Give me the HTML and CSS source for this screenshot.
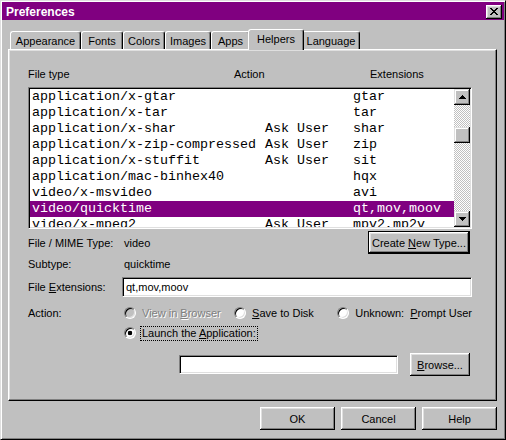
FILE: index.html
```html
<!DOCTYPE html>
<html>
<head>
<meta charset="utf-8">
<title>Preferences</title>
<link rel="stylesheet" href="styles.css">
</head>
<body>
<div class="window">
  <div class="titlebar">
    <span class="title">Preferences</span>
    <button class="close" aria-label="Close">
      <svg width="8" height="7" viewBox="0 0 8 7" shape-rendering="crispEdges">
        <rect x="0" y="0" width="2" height="1"/><rect x="6" y="0" width="2" height="1"/>
        <rect x="1" y="1" width="2" height="1"/><rect x="5" y="1" width="2" height="1"/>
        <rect x="2" y="2" width="4" height="1"/>
        <rect x="3" y="3" width="2" height="1"/>
        <rect x="2" y="4" width="4" height="1"/>
        <rect x="1" y="5" width="2" height="1"/><rect x="5" y="5" width="2" height="1"/>
        <rect x="0" y="6" width="2" height="1"/><rect x="6" y="6" width="2" height="1"/>
      </svg>
    </button>
  </div>

  <div class="tabs">
    <div class="tab tab-appearance">Appearance</div>
    <div class="tab tab-fonts">Fonts</div>
    <div class="tab tab-colors">Colors</div>
    <div class="tab tab-images">Images</div>
    <div class="tab tab-apps">Apps</div>
    <div class="tab tab-helpers selected">Helpers</div>
    <div class="tab tab-language">Language</div>
  </div>

  <div class="panel">
    <div class="list-header">
      <span>File type</span><span>Action</span><span>Extensions</span>
    </div>
    <div class="listbox">
      <div class="rows">
        <div class="row"><span>application/x-gtar</span><span></span><span>gtar</span></div>
        <div class="row"><span>application/x-tar</span><span></span><span>tar</span></div>
        <div class="row"><span>application/x-shar</span><span>Ask User</span><span>shar</span></div>
        <div class="row"><span>application/x-zip-compressed</span><span>Ask User</span><span>zip</span></div>
        <div class="row"><span>application/x-stuffit</span><span>Ask User</span><span>sit</span></div>
        <div class="row"><span>application/mac-binhex40</span><span></span><span>hqx</span></div>
        <div class="row"><span>video/x-msvideo</span><span></span><span>avi</span></div>
        <div class="row selected"><span>video/quicktime</span><span></span><span>qt,mov,moov</span></div>
        <div class="row"><span>video/x-mpeg2</span><span>Ask User</span><span>mpv2,mp2v</span></div>
      </div>
      <div class="scrollbar">
        <div class="sb-btn">
          <svg width="7" height="4" viewBox="0 0 7 4" shape-rendering="crispEdges"><path d="M3 0h1v1h1v1h1v1h1v1H0V3h1V2h1V1h1z"/></svg>
        </div>
        <div class="sb-thumb"></div>
        <div class="sb-btn sb-down">
          <svg width="7" height="4" viewBox="0 0 7 4" shape-rendering="crispEdges"><path d="M0 0h7v1H6v1H5v1H4v1H3V3H2V2H1V1H0z"/></svg>
        </div>
      </div>
    </div>

    <div class="field-row row-mime">
      <span class="label">File / MIME Type:</span>
      <span class="value">video</span>
      <button class="btn default btn-create"><span>Create <u>N</u>ew Type...</span></button>
    </div>
    <div class="field-row row-subtype">
      <span class="label">Subtype:</span>
      <span class="value">quicktime</span>
    </div>
    <div class="field-row row-ext">
      <span class="label">File <u>E</u>xtensions:</span>
      <div class="textbox textbox-ext">qt,mov,moov</div>
    </div>
    <div class="field-row row-action">
      <span class="label">Action:</span>
      <label class="opt opt-view disabled"><span class="radio"></span><span>View in <u>B</u>rowser</span></label>
      <label class="opt opt-save"><span class="radio"></span><span><u>S</u>ave to Disk</span></label>
      <label class="opt opt-unknown"><span class="radio"></span><span>Unknown:&nbsp; <u>P</u>rompt User</span></label>
    </div>
    <div class="field-row row-launch">
      <span class="label"></span>
      <label class="opt"><span class="radio checked"></span><span class="focus">Launch the <u>A</u>pplication:</span></label>
    </div>
    <div class="field-row row-app">
      <div class="textbox textbox-app"></div>
      <button class="btn btn-browse"><span><u>B</u>rowse...</span></button>
    </div>
  </div>

  <div class="dialog-buttons">
    <button class="btn btn-dialog">OK</button>
    <button class="btn btn-dialog">Cancel</button>
    <button class="btn btn-dialog">Help</button>
  </div>
</div>
</body>
</html>
```

FILE: styles.css
```css
* { box-sizing: border-box; }

body {
  margin: 0;
  background: #c0c0c0;
  font-family: "Liberation Sans", Arial, sans-serif;
  font-size: 11px;
  color: #000;
}

.window {
  width: 506px;
  height: 440px;
  border: 1px solid;
  border-color: #dfdfdf #000 #000 #dfdfdf;
  box-shadow: inset 1px 1px #fff, inset -1px -1px #808080;
  padding: 1px;
  background: #c0c0c0;
  display: flex;
  flex-direction: column;
}

.titlebar {
  height: 18px;
  flex: none;
  background: #800080;
  color: #fff;
  display: flex;
  align-items: center;
  justify-content: space-between;
  padding: 1px 2px 0 4px;
}
.title { font-weight: bold; font-size: 12px; }

button {
  font: inherit;
  color: #000;
  background: #c0c0c0;
  border: 0;
  padding: 0;
  margin: 0;
}

.close {
  width: 16px;
  height: 14px;
  display: flex;
  align-items: center;
  justify-content: center;
  box-shadow: inset -1px -1px #000, inset 1px 1px #fff, inset -2px -2px #808080, inset 2px 2px #dfdfdf;
}

/* tabs */
.tabs {
  margin: 9px 0 0 8px;
  height: 20px;
  flex: none;
  display: flex;
  align-items: flex-end;
}
.tab {
  height: 18px;
  border: 1px solid;
  border-bottom: none;
  border-color: #fff #000 transparent #fff;
  box-shadow: inset -1px 0 #808080;
  border-radius: 3px 3px 0 0;
  display: flex;
  align-items: center;
  justify-content: center;
  padding-top: 1px;
}
.tab.selected {
  height: 21px;
  margin: 0 -2px -1px;
  position: relative;
  z-index: 1;
  background: #c0c0c0;
  padding-top: 0;
  padding-bottom: 3px;
}
.tab-appearance { width: 71px; }
.tab-fonts { width: 42px; }
.tab-colors { width: 42px; }
.tab-images { width: 46px; }
.tab-apps { width: 39px; }
.tab-helpers { width: 56px; }
.tab-language { width: 58px; }

/* panel */
.panel {
  margin-left: 6px;
  width: 489px;
  height: 352px;
  flex: none;
  border: 1px solid;
  border-color: #fff #000 #000 #fff;
  box-shadow: inset -1px -1px #808080, inset 1px 1px #dfdfdf;
  padding: 18px 24px 0 19px;
}

.list-header {
  display: grid;
  grid-template-columns: 206px 136px 1fr;
  line-height: 12px;
  margin-bottom: 7px;
}

.listbox {
  height: 142px;
  border: 1px solid;
  border-color: #808080 #fff #fff #808080;
  box-shadow: inset 1px 1px #000, inset -1px -1px #dfdfdf;
  padding: 1px;
  background: #fff;
  display: flex;
}
.rows {
  flex: 1;
  overflow: hidden;
  font-family: "Liberation Mono", "Courier New", monospace;
  font-size: 13.33px;
}
.row {
  display: grid;
  grid-template-columns: 233px 88px 1fr;
  height: 16px;
  line-height: 16px;
  padding-left: 2px;
  white-space: pre;
}
.row.selected { background: #800080; color: #fff; }

.scrollbar {
  width: 16px;
  flex: none;
  display: flex;
  flex-direction: column;
  background: repeating-conic-gradient(#c0c0c0 0 25%, #fff 0 50%) 0 0 / 2px 2px;
}
.sb-btn, .sb-thumb {
  height: 16px;
  flex: none;
  background: #c0c0c0;
  box-shadow: inset -1px -1px #000, inset 1px 1px #dfdfdf, inset -2px -2px #808080, inset 2px 2px #fff;
  display: flex;
  align-items: center;
  justify-content: center;
}
.sb-thumb { margin-top: 22px; }
.sb-down { margin-top: auto; }

/* fields */
.field-row { display: flex; align-items: center; }
.label { width: 94px; flex: none; }
.value { padding-left: 2px; }

.row-mime { margin-top: 2px; height: 23px; }
.row-subtype { height: 19px; }
.row-ext { margin-top: 4px; height: 20px; }
.row-action { margin-top: 6px; height: 20px; }
.row-launch { height: 20px; }
.row-app { margin-top: 10px; height: 23px; justify-content: flex-end; }

.btn {
  box-shadow: inset -1px -1px #000, inset 1px 1px #fff, inset -2px -2px #808080, inset 2px 2px #dfdfdf;
  display: flex;
  align-items: center;
  justify-content: center;
}
.btn.default { border: 1px solid #000; }
.btn-create { margin-left: auto; margin-right: 2px; width: 102px; height: 23px; }
.btn-browse { width: 60px; height: 23px; margin-right: 2px; }
.btn-dialog { width: 75px; height: 23px; }

.textbox {
  height: 20px;
  background: #fff;
  border: 1px solid;
  border-color: #808080 #fff #fff #808080;
  box-shadow: inset 1px 1px #000, inset -1px -1px #dfdfdf;
  padding: 0 3px;
  display: flex;
  align-items: center;
}
.textbox-ext { flex: 1; }
.textbox-app { width: 219px; height: 19px; margin-right: 12px; }

.opt { display: flex; align-items: center; gap: 6px; white-space: nowrap; }
.opt-view { width: 111px; }
.opt-save { width: 104px; }
.radio {
  width: 12px;
  height: 12px;
  margin-left: 2px;
  flex: none;
  border-radius: 50%;
  border: 1px solid;
  border-color: #808080 #fff #fff #808080;
  box-shadow: inset 1px 1px #000, inset -1px -1px #dfdfdf;
  background: #fff;
}
.radio.checked { background: radial-gradient(circle at center, #000 0 2px, #fff 2.6px); }
.opt.disabled { color: #808080; text-shadow: 1px 1px #fff; }
.opt.disabled .radio { background: #c0c0c0; }
.focus { outline: 1px dotted #000; padding: 0 1px; margin-left: -1px; line-height: 13px; }

.dialog-buttons {
  margin: 6px 7px 0 0;
  display: flex;
  justify-content: flex-end;
  gap: 6px;
}
```
